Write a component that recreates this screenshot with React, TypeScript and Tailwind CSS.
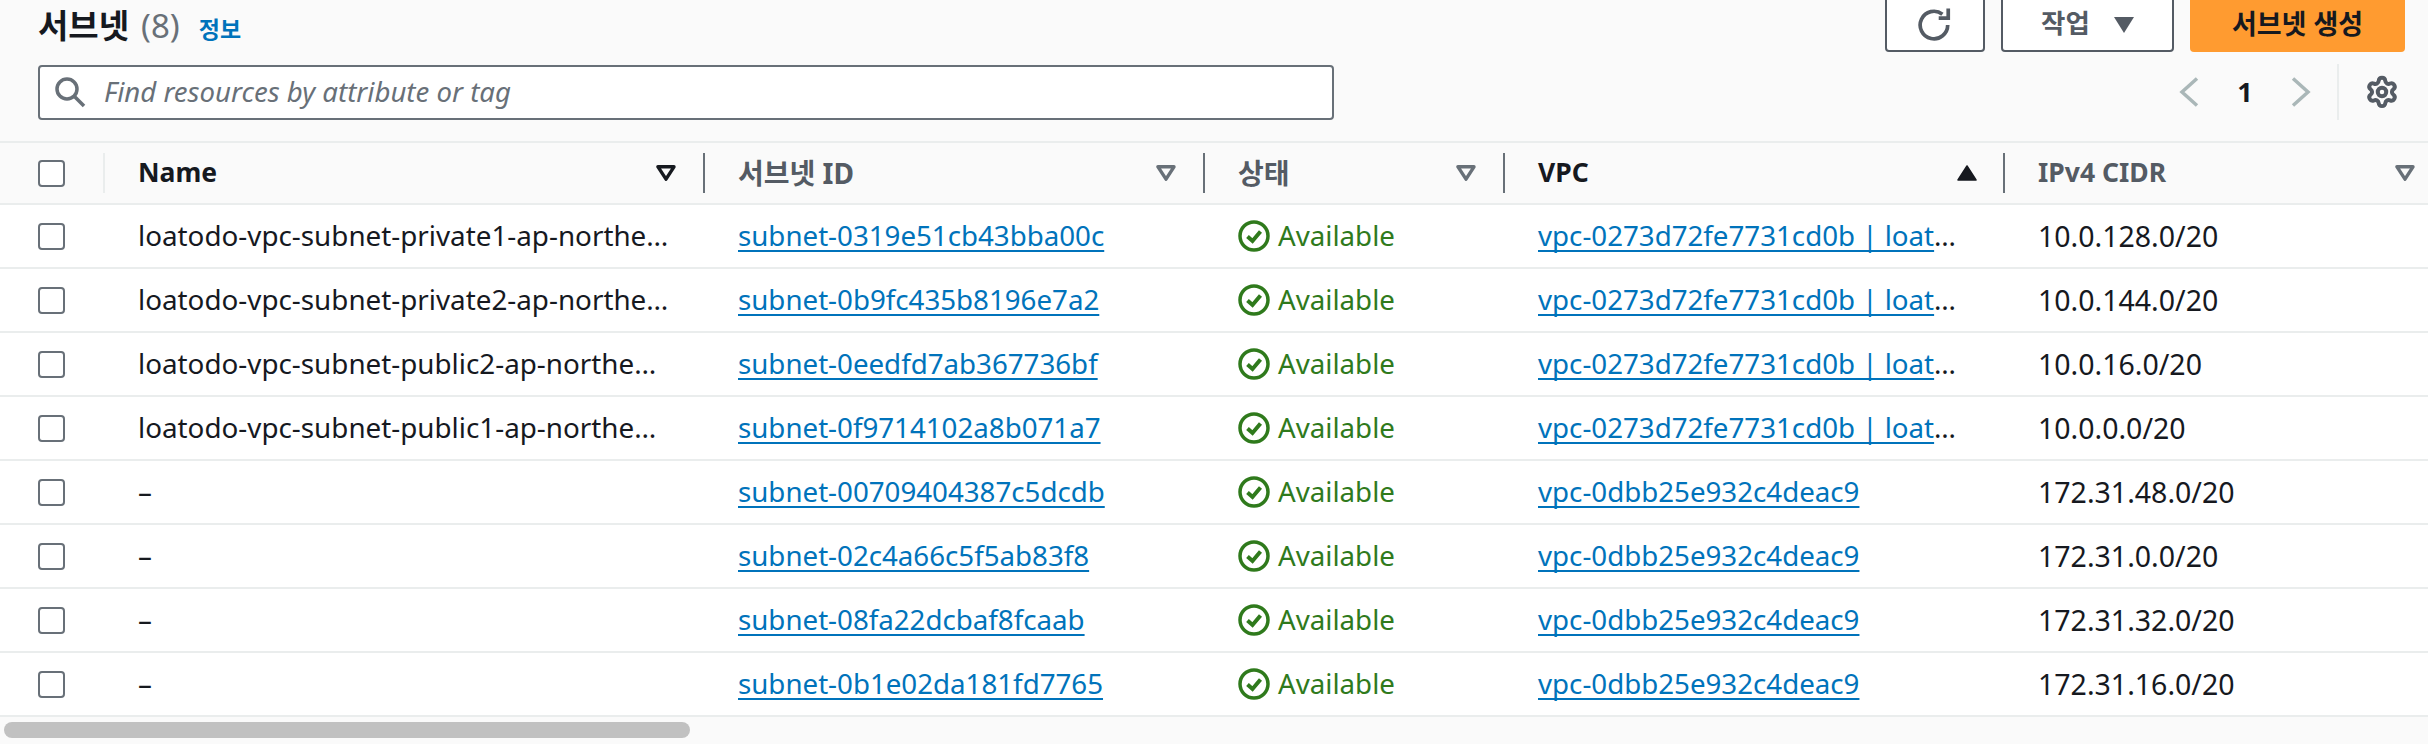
import React from 'react';
import { Settings } from 'lucide-react';

const FONT = "font-['Noto_Sans','Noto_Sans_CJK_KR',sans-serif]";
const LINK = 'text-[#0073bb] underline decoration-2 underline-offset-[4px] [text-decoration-skip-ink:none]';

interface Subnet {
  name: string;
  id: string;
  vpc: string;
  vpcCut: boolean;
  cidr: string;
}

const subnets: Subnet[] = [
  { name: 'loatodo-vpc-subnet-private1-ap-northe…', id: 'subnet-0319e51cb43bba00c', vpc: 'vpc-0273d72fe7731cd0b | loat', vpcCut: true, cidr: '10.0.128.0/20' },
  { name: 'loatodo-vpc-subnet-private2-ap-northe…', id: 'subnet-0b9fc435b8196e7a2', vpc: 'vpc-0273d72fe7731cd0b | loat', vpcCut: true, cidr: '10.0.144.0/20' },
  { name: 'loatodo-vpc-subnet-public2-ap-northe…', id: 'subnet-0eedfd7ab367736bf', vpc: 'vpc-0273d72fe7731cd0b | loat', vpcCut: true, cidr: '10.0.16.0/20' },
  { name: 'loatodo-vpc-subnet-public1-ap-northe…', id: 'subnet-0f9714102a8b071a7', vpc: 'vpc-0273d72fe7731cd0b | loat', vpcCut: true, cidr: '10.0.0.0/20' },
  { name: '–', id: 'subnet-00709404387c5dcdb', vpc: 'vpc-0dbb25e932c4deac9', vpcCut: false, cidr: '172.31.48.0/20' },
  { name: '–', id: 'subnet-02c4a66c5f5ab83f8', vpc: 'vpc-0dbb25e932c4deac9', vpcCut: false, cidr: '172.31.0.0/20' },
  { name: '–', id: 'subnet-08fa22dcbaf8fcaab', vpc: 'vpc-0dbb25e932c4deac9', vpcCut: false, cidr: '172.31.32.0/20' },
  { name: '–', id: 'subnet-0b1e02da181fd7765', vpc: 'vpc-0dbb25e932c4deac9', vpcCut: false, cidr: '172.31.16.0/20' },
];

const Checkbox = () => (
  <div className="h-[27px] w-[27px] rounded-[4px] border-2 border-[#687078] bg-white" />
);

const SortIcon = ({ mode }: { mode: 'idle' | 'dark' | 'asc' }) => {
  if (mode === 'asc') {
    return (
      <svg width="20" height="16" viewBox="0 0 20 16" className="text-[#16191f]">
        <path d="M10 1 L19 15 L1 15 Z" fill="currentColor" stroke="currentColor" strokeWidth="1.5" strokeLinejoin="round" />
      </svg>
    );
  }
  return (
    <svg width="20" height="16" viewBox="0 0 20 16" className={mode === 'dark' ? 'text-[#16191f]' : 'text-[#687078]'}>
      <path d="M2 1.8 L18 1.8 L10 14.2 Z" fill="none" stroke="currentColor" strokeWidth="3.4" strokeLinejoin="round" />
    </svg>
  );
};

const HeaderCell = ({
  label,
  active,
  korean,
  sort,
  sortRight,
}: {
  label: string;
  active?: boolean;
  korean?: boolean;
  sort: 'idle' | 'dark' | 'asc';
  sortRight: string;
}) => (
  <div className="flex h-[40px] items-center justify-between border-r-2 border-[#687078] pl-[33px]">
    <span
      className={`font-bold ${korean ? 'text-[28px]' : 'text-[26.5px]'} ${active ? 'text-[#16191f]' : 'text-[#545b64]'}`}
    >
      {label}
    </span>
    <span className={sortRight}>
      <SortIcon mode={sort} />
    </span>
  </div>
);

const CheckCircle = () => (
  <svg width="32" height="32" viewBox="0 0 32 32" fill="none" className="shrink-0">
    <circle cx="16" cy="16" r="14" stroke="#2f7a1c" strokeWidth="3.5" />
    <path d="M9.5 16.5 L14.5 21 L22.5 11.5" stroke="#2f7a1c" strokeWidth="4" />
  </svg>
);

const App = () => {
  return (
    <div className={`h-[744px] w-[2428px] overflow-hidden bg-[#fafafa] ${FONT} text-[#16191f]`}>
      <div className="flex items-start justify-between pl-[38px] pr-[23px]">
        <div className="flex h-[52px] items-baseline">
          <h1 className="text-[33px] font-bold leading-[52px]">서브넷</h1>
          <span className="ml-[12px] text-[33px] leading-[52px] text-[#687078]">(8)</span>
          <a className="ml-[19px] text-[23px] font-bold leading-[52px] text-[#0073bb]">정보</a>
        </div>
        <div className="-mt-[10px] flex gap-[16px]">
          <button className="flex h-[62px] w-[100px] items-center justify-center rounded-[4px] border-2 border-[#545b64] bg-white text-[#545b64]">
            <svg width="36" height="36" viewBox="0 0 34 34" fill="none" className="mt-[8px]">
              <path d="M29 17a13 13 0 1 1-5-10.2" stroke="currentColor" strokeWidth="3.5" />
              <path d="M29.5 1.5v9h-9" stroke="currentColor" strokeWidth="3.5" />
            </svg>
          </button>
          <button className="flex h-[62px] w-[173px] items-center justify-center gap-[24px] rounded-[4px] border-2 border-[#545b64] bg-white pt-[6px] text-[26.5px] font-bold text-[#545b64]">
            작업
            <svg width="20" height="16" viewBox="0 0 20 16" className="mt-[2px]">
              <path d="M0 0 H20 L10 16 Z" fill="currentColor" />
            </svg>
          </button>
          <button className="flex h-[62px] w-[215px] items-center justify-center rounded-[4px] bg-[#ff9b30] pt-[6px] text-[27px] font-bold text-[#16191f]">
            서브넷 생성
          </button>
        </div>
      </div>

      <div className="mt-[12px] flex items-center justify-between pl-[38px] pr-[29px]">
        <div className="flex h-[55px] w-[1296px] items-center gap-[18px] rounded-[4px] border-2 border-[#687078] bg-white pl-[14px]">
          <svg width="32" height="32" viewBox="0 0 32 32" fill="none" className="text-[#687078]">
            <circle cx="13" cy="13" r="10" stroke="currentColor" strokeWidth="3.5" />
            <path d="M20 20 L30 30" stroke="currentColor" strokeWidth="3.5" />
          </svg>
          <span className="text-[27.6px] italic text-[#687078]">Find resources by attribute or tag</span>
        </div>
        <div className="flex h-[56px] items-center">
          <svg width="20" height="30" viewBox="0 0 20 30" fill="none" className="text-[#aab7b8]">
            <path d="M18 1.5 L3 15 L18 28.5" stroke="currentColor" strokeWidth="3.5" />
          </svg>
          <span className="ml-[36px] w-[20px] text-center text-[27px] font-bold">1</span>
          <svg width="20" height="30" viewBox="0 0 20 30" fill="none" className="ml-[36px] text-[#aab7b8]">
            <path d="M2 1.5 L17 15 L2 28.5" stroke="currentColor" strokeWidth="3.5" />
          </svg>
          <div className="ml-[26px] h-[56px] w-[2px] bg-[#eaeded]" />
          <Settings size={34} strokeWidth={2.8} className="ml-[26px] text-[#545b64]" />
        </div>
      </div>

      <div className="mt-[21px] border-y-2 border-[#eaeded]">
        <div className="grid h-[60px] grid-cols-[105px_600px_500px_300px_500px_423px] items-center">
          <div className="flex h-[40px] items-center border-r-2 border-[#eaeded] pl-[38px]">
            <Checkbox />
          </div>
          <HeaderCell label="Name" active sort="dark" sortRight="pr-[27px]" />
          <HeaderCell label="서브넷 ID" korean sort="idle" sortRight="pr-[27px]" />
          <HeaderCell label="상태" korean sort="idle" sortRight="pr-[27px]" />
          <HeaderCell label="VPC" active sort="asc" sortRight="pr-[26px]" />
          <div className="flex items-center justify-between pl-[33px] pr-[13px]">
            <span className="text-[26.5px] font-bold text-[#545b64]">IPv4 CIDR</span>
            <SortIcon mode="idle" />
          </div>
        </div>
      </div>

      <div className="bg-white">
        {subnets.map((subnet) => (
          <div
            key={subnet.id}
            className="grid h-[64px] grid-cols-[105px_600px_500px_300px_500px_423px] items-center border-b-2 border-[#eaeded] text-[27.7px]"
          >
            <div className="pl-[38px]">
              <Checkbox />
            </div>
            <div className="pl-[33px] text-[27.8px]">{subnet.name}</div>
            <div className="pl-[33px]">
              <a className={LINK}>{subnet.id}</a>
            </div>
            <div className="flex items-center gap-[8px] pl-[33px] text-[#2f7a1c]">
              <CheckCircle />
              Available
            </div>
            <div className="pl-[33px]">
              <a className={LINK}>{subnet.vpc}</a>
              {subnet.vpcCut && '…'}
            </div>
            <div className="pl-[33px] text-[28.5px]">{subnet.cidr}</div>
          </div>
        ))}
      </div>

      <div className="flex h-[26px] items-center pl-[4px]">
        <div className="h-[16px] w-[686px] rounded-full bg-[#c1c1c1]" />
      </div>
    </div>
  );
};

export default App;
